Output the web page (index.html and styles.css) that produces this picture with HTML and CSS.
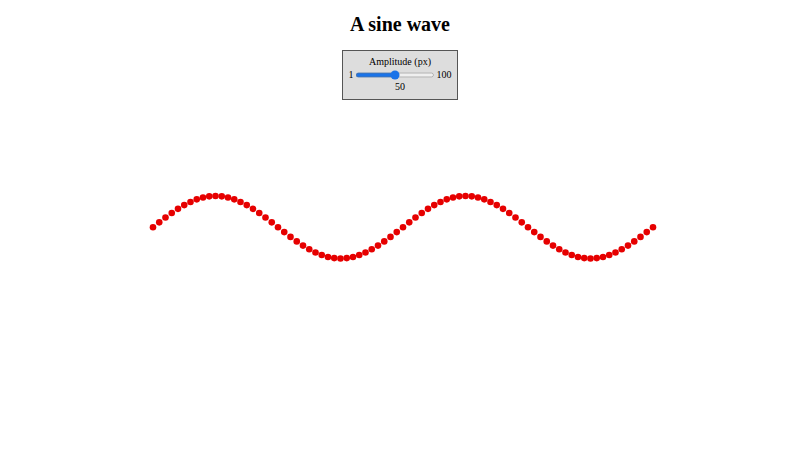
FILE: index.html
```html
<!DOCTYPE html>
<html>
<head>
<meta charset="utf-8">
<title>A sine wave</title>
<link rel="stylesheet" href="styles.css">
</head>
<body>
<h1 class="title">A sine wave</h1>
<div class="controls-wrap">
  <div class="controls">
    <div class="label">Amplitude (px)</div>
    <div class="row">
      <span class="end">1</span>
      <input class="slider" type="range" min="1" max="100" value="50">
      <span class="end">100</span>
    </div>
    <div class="value">50</div>
  </div>
</div>
<svg class="wave" id="wave" width="800" height="260" xmlns="http://www.w3.org/2000/svg"></svg>
<script src="script.js"></script>
</body>
</html>
```

FILE: styles.css
```css
html, body {
  margin: 0;
  padding: 0;
  background: #fff;
}
body {
  font-family: "Liberation Serif", "Times New Roman", serif;
  color: #000;
  width: 800px;
}
.title {
  font-size: 20px;
  font-weight: bold;
  line-height: 23px;
  margin: 13.4px 0;
  text-align: center;
}
.controls-wrap {
  display: flex;
  justify-content: center;
}
.controls {
  display: flex;
  flex-direction: column;
  align-items: center;
  padding: 5px 5px 7px 5px;
  border: 1px solid #555;
  background: #dddddd;
  font-size: 10px;
  line-height: 11.5px;
}
.row {
  display: flex;
  align-items: center;
  margin-top: 1px;
}
.slider {
  zoom: 0.625;
  margin: 2px;
  accent-color: #1a73e8;
}
.wave {
  display: block;
}
.dot {
  fill: #e60000;
}
```

FILE: script.js
```js
(function () {
  var svg = document.getElementById('wave');
  var top = svg.getBoundingClientRect().top;
  var cy0 = 227.5 - top;
  var ns = 'http://www.w3.org/2000/svg';
  for (var i = 0; i <= 80; i++) {
    var x = 153 + i * 6.25;
    var y = cy0 - 31.25 * Math.sin(2 * Math.PI * (i * 6.25) / 250);
    var c = document.createElementNS(ns, 'circle');
    c.setAttribute('class', 'dot');
    c.setAttribute('cx', x.toFixed(2));
    c.setAttribute('cy', y.toFixed(2));
    c.setAttribute('r', '3.3');
    svg.appendChild(c);
  }
})();
```
